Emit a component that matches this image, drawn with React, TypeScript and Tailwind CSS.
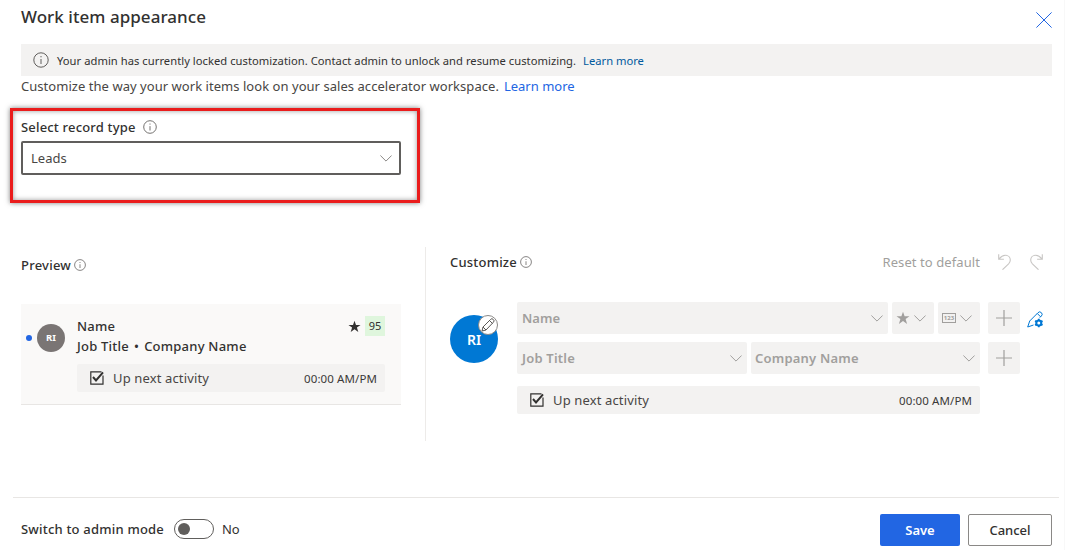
import type { ReactNode } from "react";

function T({ c, children }: { c: string; children: ReactNode }) {
  return <span className={`whitespace-nowrap ${c}`}>{children}</span>;
}

function Info({ c }: { c: string }) {
  return (
    <svg className={c} viewBox="0 0 16 16" fill="none" stroke="currentColor">
      <circle cx="8" cy="8" r="7.2" strokeWidth="1" />
      <path d="M8 7v5M8 4v1.3" strokeWidth="1" />
    </svg>
  );
}

function Chevron({ c }: { c: string }) {
  return (
    <svg className={c} viewBox="0 0 12 7" width="12" height="7" fill="none" stroke="currentColor">
      <path d="M.4.5 6 6.1 11.6.5" />
    </svg>
  );
}

function Star({ c, size }: { c: string; size: number }) {
  return (
    <svg className={c} viewBox="0 0 14 14" width={size} height={size} fill="currentColor">
      <path d="M7 .8 8.6 5.3h4.9L9.6 8.1l1.5 4.9L7 10l-4.1 3 1.5-4.9L.5 5.3h4.9z" />
    </svg>
  );
}

function Check() {
  return (
    <svg className="text-[#323130]" viewBox="0 0 14 14" width="14" height="14" fill="none" stroke="currentColor">
      <path d="M11.500.9H.8v12.300h12.200V4.500" strokeWidth="1.2" />
      <path d="m3 6 3 3.400 7-8" strokeWidth="2" />
    </svg>
  );
}

function Activity({ c }: { c: string }) {
  return (
    <div className={`flex h-7 items-center rounded-xs bg-[#f3f2f1] pr-2 pl-[13px] ${c}`}>
      <Check />
      <T c="ml-[9px] pt-0.5 text-[13px] tracking-[0.14px] text-[#484644]">Up next activity</T>
      <T c="ml-auto pt-0.5 text-[11.5px] tracking-[0.1px] text-[#3b3a39]">00:00 AM/PM</T>
    </div>
  );
}

function Field({ label, c }: { label: string; c: string }) {
  return (
    <div className={`flex h-8 items-center justify-between rounded-xs bg-[#f3f2f1] pr-[5px] ${c}`}>
      <T c="pt-0.5 text-[13px] font-semibold text-[#a19f9d]">{label}</T>
      <Chevron c="text-[#a19f9d]" />
    </div>
  );
}

function Plus() {
  return (
    <div className="ml-2 flex h-8 w-8 items-center justify-center rounded-xs bg-[#f3f2f1] text-[#a19f9d]">
      <svg viewBox="0 0 16 16" width="16" height="16" stroke="currentColor"><path d="M8 0v16M0 8h16" strokeWidth="1.2" /></svg>
    </div>
  );
}

function Undo({ c }: { c: string }) {
  return (
    <svg className={c} viewBox="0 0 13 16" width="13" height="16" fill="none" stroke="currentColor">
      <path d="M.7.300v5h5.200M.9 5.100C3 2.500 5 1.300 7.300 1.300c3 0 5 2.200 5 4.800 0 1.600-.7 2.800-1.700 3.800L4.500 15.700" strokeWidth="1.100" />
    </svg>
  );
}

export default function App() {
  return (
    <div className="flex h-[550px] w-[1065px] flex-col overflow-hidden border-r border-[#f8f8f8] bg-white font-['Noto_Sans','Open_Sans',sans-serif] text-[#323130]">
      <header className="flex h-11 shrink-0 items-start justify-between pr-3 pl-[21px]">
        <h1 className="flex h-[34px] items-center"><T c="text-[17px] font-medium tracking-[0.04px]">Work item appearance</T></h1>
        <svg className="mt-3 text-[#2266e3]" viewBox="0 0 16 16" width="16" height="16" stroke="currentColor"><path d="m.4.400 15.200 15.200M15.600.4.400 15.600" /></svg>
      </header>
      <div className="ml-[21px] flex h-8 w-[1031px] shrink-0 items-center bg-[#f3f2f1] pl-3">
        <Info c="size-4 text-[#605e5c]" />
        <T c="ml-2 pt-0.5 text-[11.2px] tracking-[0.04px]">Your admin has currently locked customization. Contact admin to unlock and resume customizing.</T>
        <T c="ml-[7px] pt-0.5 text-[11.2px] text-[#005a9e]">Learn more</T>
      </div>
      <p className="flex h-8 shrink-0 items-start pl-[21px] text-[13px] leading-[21px]">
        <T c="tracking-[0.042px] text-[#484644]">Customize the way your work items look on your sales accelerator workspace.</T>
        <T c="ml-[5px] text-[#2266e3]">Learn more</T>
      </p>
      <section className="ml-[10px] h-[95px] w-[410px] shrink-0 border-3 border-[#ea1c1c] pt-[6px] pl-2 shadow-[0_0_5px_rgba(0,0,0,0.5),inset_0_0_5px_rgba(0,0,0,0.4)]">
        <div className="flex h-5 items-center"><T c="pt-0.5 text-[13px] font-medium tracking-[0.18px]">Select record type</T><Info c="ml-[7px] size-[14px] text-[#605e5c]" /></div>
        <div className="mt-1 flex h-[34px] w-[380px] items-center justify-between rounded-xs border-2 border-[#605e5c] pr-[7px] pl-2">
          <T c="pt-0.5 text-[13px] text-[#484644]">Leads</T><Chevron c="text-[#8a8886]" />
        </div>
      </section>
      <main className="mt-11 flex h-[194px] shrink-0">
        <section className="ml-[21px] w-[405px] border-r border-[#edebe9]">
          <h2 className="mt-2 flex h-5 items-center"><T c="pt-0.5 text-[13px] font-medium tracking-[0.23px]">Preview</T><Info c="ml-[3px] size-3 text-[#605e5c]" /></h2>
          <div className="mt-[29px] flex h-[101px] w-[380px] border-b border-[#e8e6e4] bg-[#faf9f8] pr-4">
            <div className="flex h-[68px] w-14 items-center pl-[5px]">
              <i className="size-[6px] rounded-full bg-[#2266e3]" />
              <span className="ml-[5px] flex size-7 items-center justify-center rounded-full bg-[#7a7574] text-[9.5px] font-bold text-white">RI</span>
            </div>
            <div className="flex-1 pt-3">
              <div className="flex h-5 items-center">
                <T c="pt-0.5 text-[13px] font-medium tracking-[0.2px]">Name</T>
                <Star c="ml-auto" size={13} />
                <span className="ml-1 flex size-5 items-center justify-center bg-[#dff6dd] text-[11px]">95</span>
              </div>
              <div className="flex h-5 items-center text-[13px] font-medium tracking-[0.23px]">
                <T c="pt-0.5">Job Title</T><T c="mx-[5px] pt-0.5">•</T><T c="pt-0.5">Company Name</T>
              </div>
              <Activity c="mt-2" />
            </div>
          </div>
        </section>
        <section className="pl-6">
          <div className="mt-[5px] flex h-5 w-[593px] items-center">
            <T c="pt-0.5 text-[13px] font-medium tracking-[0.2px]">Customize</T><Info c="ml-[3px] size-3 text-[#605e5c]" />
            <T c="ml-auto pt-0.5 text-[13px] tracking-[0.08px] text-[#a19f9d]">Reset to default</T>
            <Undo c="ml-[18px] text-[#c8c6c4]" /><Undo c="ml-[19px] -scale-x-100 text-[#c8c6c4]" />
          </div>
          <div className="mt-[30px] flex">
            <div className="relative mt-[13px] flex size-12 items-center justify-center rounded-full bg-[#0078d4] text-[14px] font-semibold text-white">
              RI
              <span className="absolute top-0 left-7 flex size-5 items-center justify-center rounded-full border border-[#8a8886] bg-white text-[#484644]">
                <svg viewBox="0 0 14 14" width="14" height="14" fill="none" stroke="currentColor"><path d="m1 13 1-4 7.500-7.500a1.800 1.800 0 0 1 2.800 0 1.800 1.800 0 0 1 0 2.800L5 12zM2 9l3 3M8.500 2.500l3 3" strokeWidth=".9" /></svg>
              </span>
            </div>
            <div className="ml-[19px]">
              <div className="flex items-center">
                <Field label="Name" c="w-[371px] pl-[5px]" />
                <div className="ml-1 flex h-8 w-[42px] items-center justify-between rounded-xs bg-[#f3f2f1] pr-2 pl-1 text-[#a19f9d]"><Star c="" size={14} /><Chevron c="" /></div>
                <div className="ml-1 flex h-8 w-[42px] items-center justify-between rounded-xs bg-[#f3f2f1] pr-2 pl-1 text-[#a19f9d]">
                  <span className="flex h-[10px] w-[14px] items-center justify-center border border-[#a19f9d] text-[6px] leading-none font-bold">123</span><Chevron c="" />
                </div>
                <Plus />
                <svg className="ml-[7px] mt-[2px] text-[#0078d4]" viewBox="0 0 17 17" width="17" height="17" fill="none" stroke="currentColor">
                  <path d="M6.500 14 .7 16l2-6L11 1.700a2.300 2.300 0 0 1 3.400 0 2.300 2.300 0 0 1 0 3.300L12.800 6.600M10.300 2.500l3.500 3.500" />
                  <circle cx="11.800" cy="12" r="2.500" strokeWidth="2" />
                  <path d="M11.800 7.800v2M11.800 14.200v2M8.100 9.900l1.700 1M13.800 13.100l1.700 1M8.100 14.100l1.700-1M13.800 10.900l1.700-1" strokeWidth="1.800" />
                </svg>
              </div>
              <div className="mt-2 flex tracking-[0.2px]">
                <Field label="Job Title" c="w-[230px] pl-[5px]" /><Field label="Company Name" c="ml-1 w-[229px] pl-1" /><Plus />
              </div>
              <Activity c="mt-3 w-[463px]" />
            </div>
          </div>
        </section>
      </main>
      <footer className="mt-14 ml-[13px] flex h-[53px] w-[1046px] items-start border-t border-[#e8e6e4] pr-[7px] pl-2">
        <div className="mt-[21px] flex h-5 items-center">
          <T c="pt-0.5 text-[13px] font-medium tracking-[0.2px]">Switch to admin mode</T>
          <span className="ml-[10px] flex h-5 w-10 items-center rounded-full border border-[#605e5c] pl-[3px]"><i className="size-3 rounded-full bg-[#605e5c]" /></span>
          <T c="ml-2 pt-0.5 text-[13px]">No</T>
        </div>
        <button className="mt-4 ml-auto h-8 w-20 rounded-xs bg-[#2266e3] pt-0.5 text-[13px] text-white"><T c="font-semibold">Save</T></button>
        <button className="mt-4 ml-2 h-8 w-[84px] rounded-xs border border-[#8a8886] pt-0.5 text-[13px]"><T c="font-medium">Cancel</T></button>
      </footer>
    </div>
  );
}
